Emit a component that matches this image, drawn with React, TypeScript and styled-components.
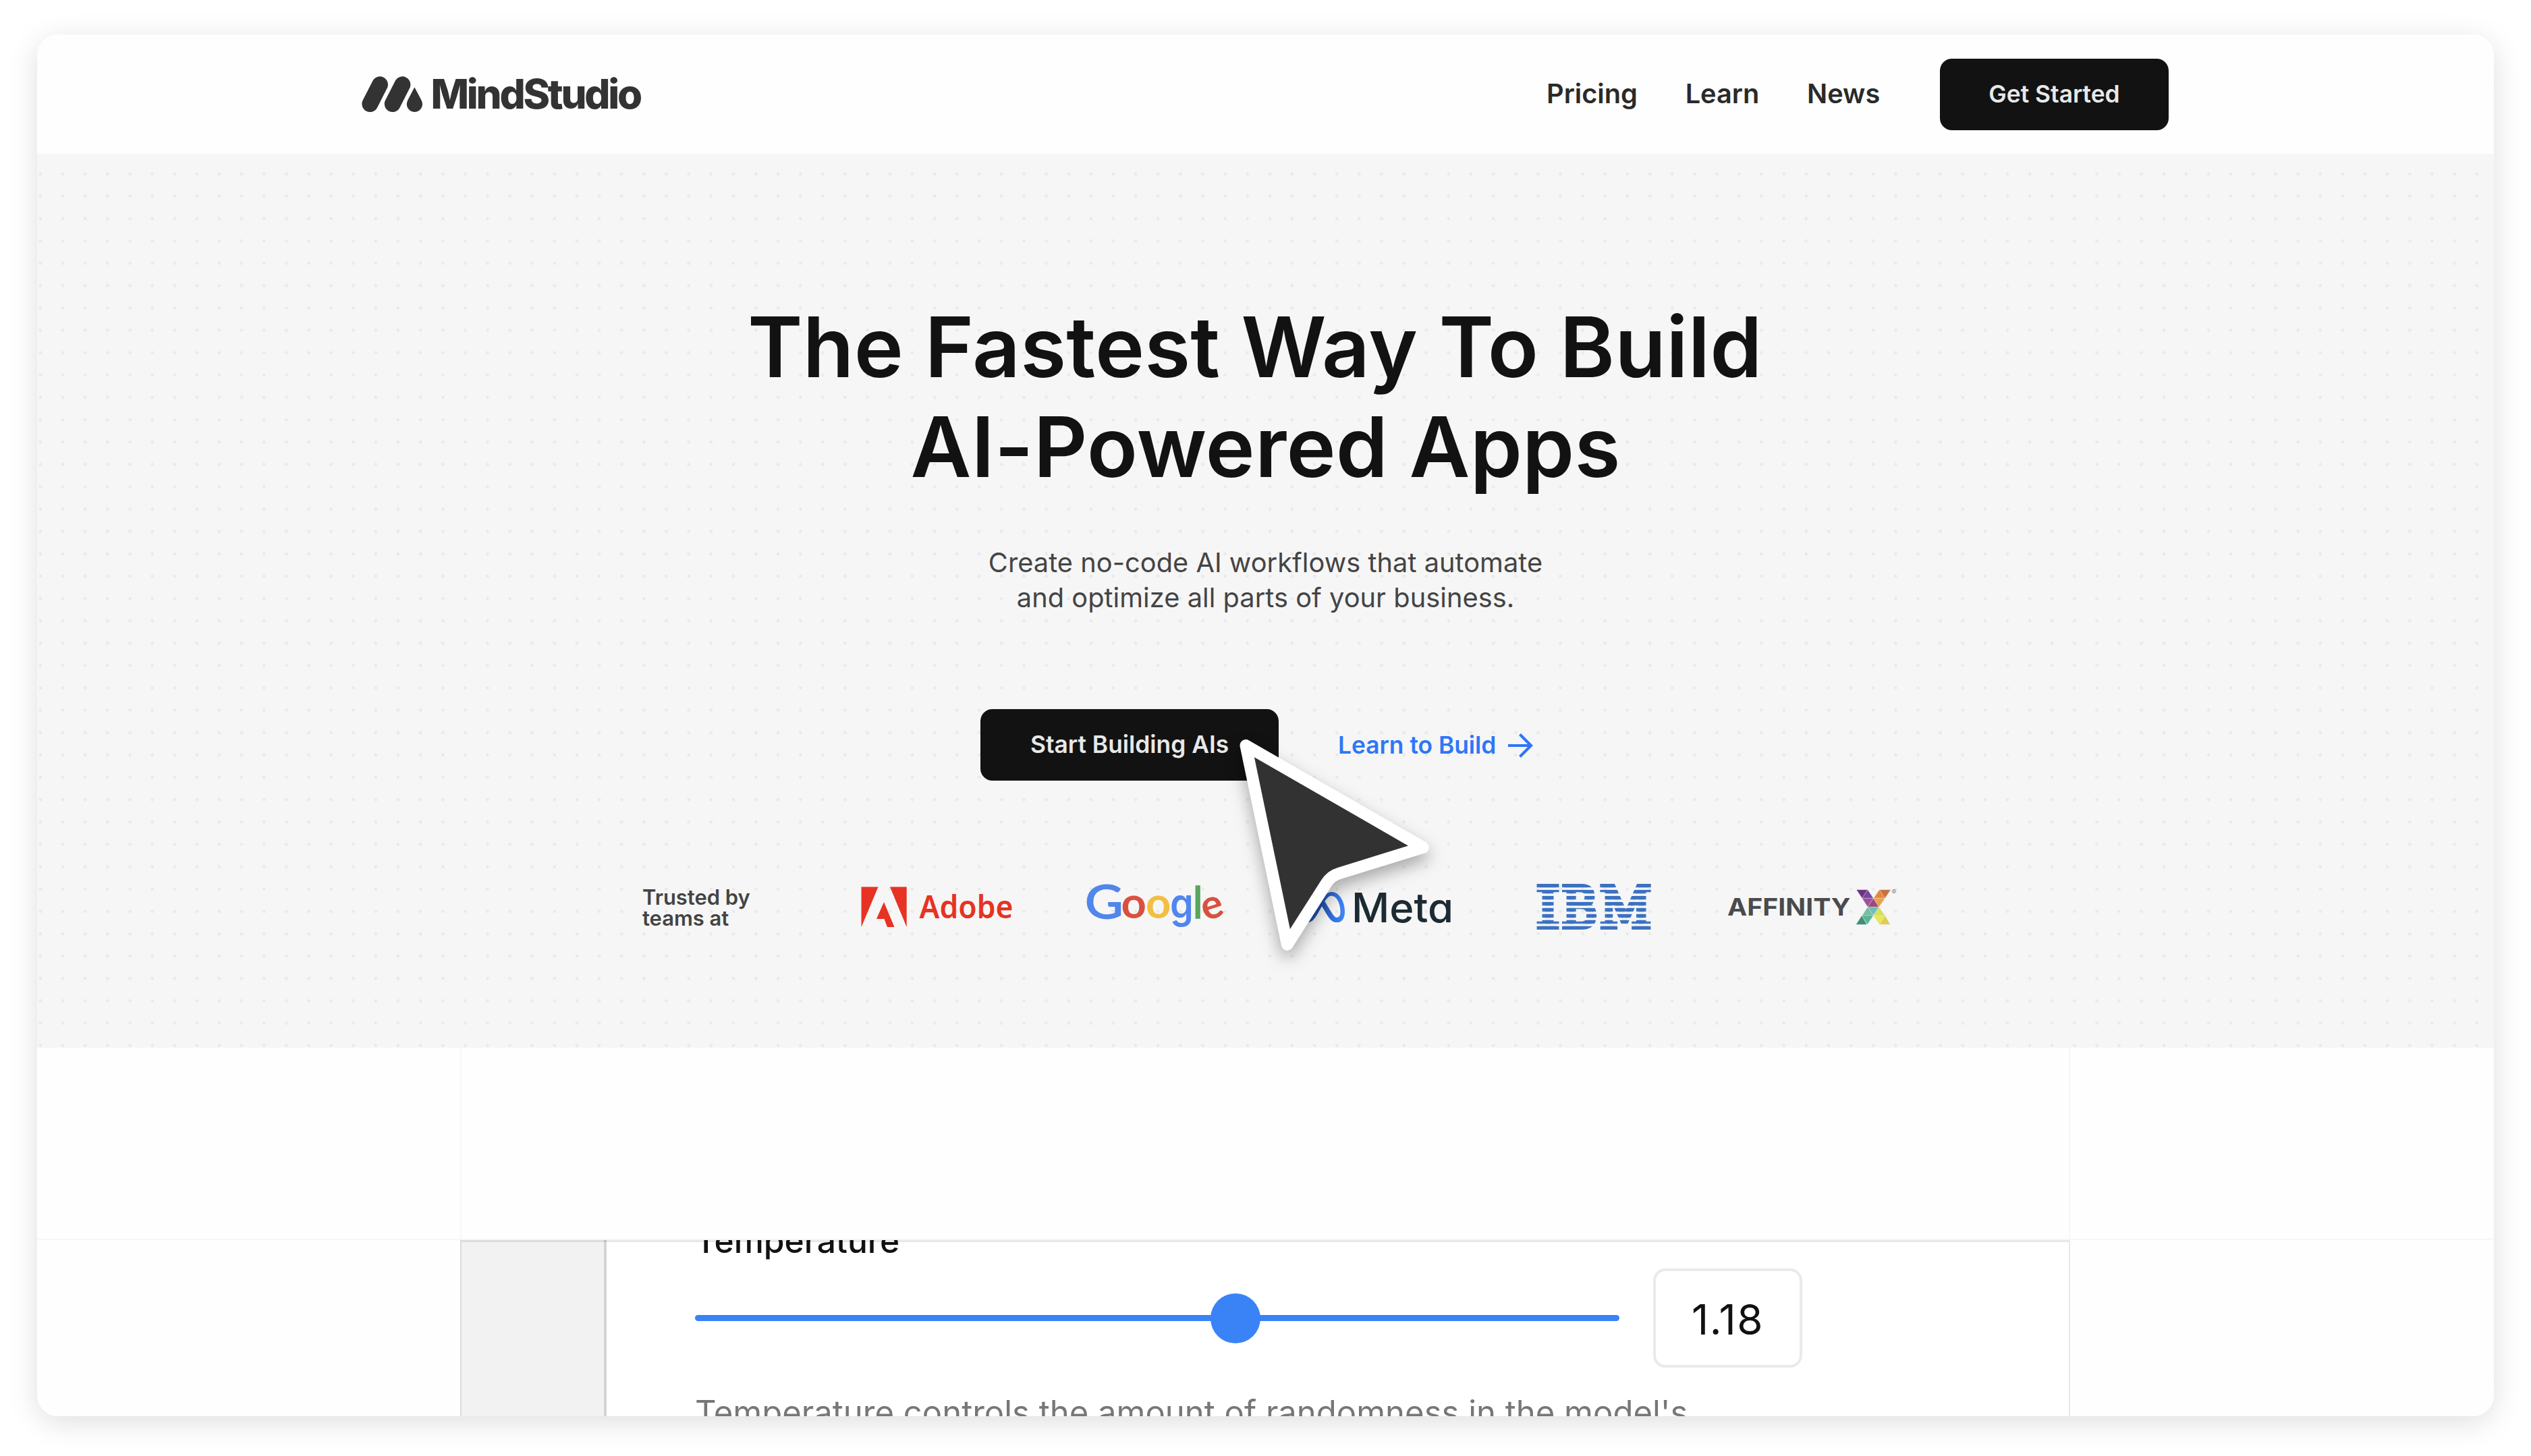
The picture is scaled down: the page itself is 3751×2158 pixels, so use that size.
import React from "react";
import styled, { createGlobalStyle } from "styled-components";
import { SiMeta } from "react-icons/si";

const GlobalStyle = createGlobalStyle`
  html, body { margin: 0; padding: 0; background: #ffffff; }
  body { font-family: Inter, "Liberation Sans", sans-serif; font-optical-sizing: none; }
  *, *::before, *::after { box-sizing: border-box; }
`;

const Page = styled.div`
  width: 3751px;
  height: 2158px;
  padding: 51px 55px 59px;
  overflow: hidden;
`;

const Shadow = styled.div`
  width: 3641px;
  height: 2048px;
  border-radius: 31px;
  box-shadow: 0 9px 44px rgba(0, 0, 0, 0.13);
`;

const Window = styled.div`
  display: flex;
  flex-direction: column;
  width: 3641px;
  height: 2048px;
  border-radius: 31px;
  background: #fefefe;
  overflow: hidden;
`;

const Header = styled.header`
  display: flex;
  align-items: center;
  justify-content: space-between;
  flex: none;
  height: 177px;
  padding: 0 482px 0 481px;
`;

const Brand = styled.a`
  display: flex;
  align-items: center;
  gap: 11.5px;
  color: #333333;
`;

const BrandName = styled.span`
  padding-bottom: 2px;
  font-size: 60px;
  font-weight: 800;
  line-height: 72px;
  letter-spacing: -3.25px;
`;

const Nav = styled.nav`
  display: flex;
  align-items: center;
  gap: 70.7px;
`;

const NavLink = styled.a`
  padding-bottom: 2px;
  color: #2a2a2a;
  font-size: 39.76px;
  font-weight: 600;
  line-height: 48px;
`;

const Button = styled.a<{ $width: number }>`
  display: flex;
  align-items: center;
  justify-content: center;
  width: ${(p) => p.$width}px;
  height: 106px;
  border-radius: 17.7px;
  background: #121212;
  color: #e8e8e8;
  font-size: 35.35px;
  font-weight: 600;
  line-height: 42px;
`;

const NavButton = styled(Button)`
  margin-left: 18px;
`;

const Hero = styled.section`
  position: relative;
  display: flex;
  flex-direction: column;
  align-items: center;
  flex: none;
  height: 1325px;
  padding-top: 212px;
  background-color: #f6f6f6;
  background-image: radial-gradient(circle at 16.57px 16.57px, #e9e9e9 1.9px, rgba(233, 233, 233, 0) 2.7px);
  background-size: 33.136px 33.136px;
  background-position: -11.57px 13.1px;
`;

const Title = styled.h1`
  margin: 0;
  color: #121212;
  font-size: 123.7px;
  font-weight: 600;
  line-height: 148px;
  letter-spacing: 0.18px;
  text-align: center;
  white-space: nowrap;
`;

const Subtitle = styled.p`
  margin: 72px 0 0;
  color: #444444;
  font-size: 39.76px;
  line-height: 51.7px;
  letter-spacing: 0.04px;
  text-align: center;
  white-space: nowrap;
`;

const Actions = styled.div`
  display: flex;
  align-items: center;
  margin-top: 140px;
`;

const LearnLink = styled.a`
  display: flex;
  align-items: center;
  gap: 17px;
  width: 403px;
  padding: 1px 0 0 88px;
  color: #2f76f6;
  font-size: 35.35px;
  font-weight: 600;
  line-height: 42px;
  white-space: nowrap;
`;

const Trusted = styled.div`
  display: grid;
  grid-template-columns: 324px 334px 314px 353px 283px 260px;
  align-self: flex-start;
  align-items: start;
  height: 72px;
  margin: 151.6px 0 0 897px;
`;

const TrustedLabel = styled.span`
  margin-top: 4.6px;
  color: #444444;
  font-size: 30.93px;
  font-weight: 600;
  line-height: 31px;
`;

const Logo = styled.svg`
  display: block;
  overflow: visible;
`;

const Pointer = styled.svg`
  position: absolute;
  left: 1745px;
  top: 822px;
  overflow: visible;
  filter: drop-shadow(0 11px 12px rgba(0, 0, 0, 0.32));
`;

const Showcase = styled.section`
  display: grid;
  grid-template-columns: 627px 2386px 628px;
  grid-template-rows: 285px 261px;
  flex: 1;
`;

const Cell = styled.div<{ $sides?: boolean; $bottom?: boolean }>`
  border: 0 solid #f6f6f6;
  border-left-width: ${(p) => (p.$sides ? "2px" : "0")};
  border-right-width: ${(p) => (p.$sides ? "2px" : "0")};
  border-bottom-width: ${(p) => (p.$bottom ? "2px" : "0")};
`;

const Preview = styled.div`
  position: relative;
  display: flex;
  height: 261px;
  background: #ffffff;
  overflow: hidden;

  &::after {
    content: "";
    position: absolute;
    inset: 0;
    border: solid rgba(0, 0, 0, 0.09);
    border-width: 3px 2px 0 2px;
  }
`;

const Rail = styled.div`
  flex: none;
  width: 217px;
  border-right: 4px solid #d4d4d4;
  background: #f2f2f2;
`;

const Setting = styled.div`
  display: flex;
  flex-direction: column;
  flex: none;
  width: 1900px;
  margin-top: -30px;
  padding-left: 131px;
`;

const SettingTitle = styled.div`
  flex: none;
  height: 62px;
  color: #111111;
  font-size: 49.7px;
  font-weight: 500;
  line-height: 62px;
`;

const SettingRow = styled.div`
  display: flex;
  flex: none;
  align-items: center;
  gap: 50px;
  height: 147px;
  margin-top: 10px;
`;

const Track = styled.div`
  display: flex;
  flex: none;
  align-items: center;
  width: 1370px;
  height: 9px;
  padding-left: 764px;
  border-radius: 5px;
  background: #3a83f6;
`;

const Knob = styled.div`
  flex: none;
  width: 74px;
  height: 74px;
  border-radius: 50%;
  background: #3a83f6;
`;

const ValueBox = styled.div`
  display: flex;
  flex: none;
  align-items: center;
  justify-content: center;
  width: 221px;
  height: 147px;
  padding-top: 3px;
  border: 4px solid #eaeaea;
  border-radius: 18px;
  color: #111111;
  font-size: 62px;
  letter-spacing: 1.4px;
`;

const SettingHint = styled.div`
  flex: none;
  margin-top: 36px;
  color: #777777;
  font-size: 49px;
  line-height: 62px;
  white-space: nowrap;
`;

const BrandMark = () => (
  <Logo width="91" height="54" viewBox="0 0 91 54">
    <g stroke="#333333" strokeWidth="24" strokeLinecap="round">
      <path d="M12.4 41 L27 12.4" />
      <path d="M45.8 41 L60.4 12.4" />
    </g>
    <path
      fill="#333333"
      d="M78.3 16.2 L88 34.5 C90.5 39.5 90.6 43 88.6 46.8 C86.5 50.7 82.9 53 78.5 53 C74 53 70.3 50.7 68.2 46.8 C66.2 43 66.4 39.5 68.8 34.5 Z"
    />
  </Logo>
);

const Arrow = () => (
  <Logo width="38" height="38" viewBox="0 0 38 38" fill="none" stroke="currentColor" strokeWidth="4.2">
    <path d="M1 19 H35 M18.5 2.5 L35 19 L18.5 35.5" />
  </Logo>
);

const AdobeLogo = () => (
  <Logo width="230" height="72" viewBox="1276 1309 230 72" fill="#e63323">
    <path d="M1276.5 1314.5 H1301.5 L1276.5 1374 Z M1319 1314.5 H1343.7 V1374 Z M1310 1337 L1325.5 1374 H1315 L1310.5 1362 H1299 Z" />
    <text x="1362.5" y="1361" fontFamily='"Noto Sans", sans-serif' fontWeight="600" fontSize="46" textLength="139" lengthAdjust="spacingAndGlyphs">
      Adobe
    </text>
  </Logo>
);

const GoogleLogo = () => (
  <Logo width="210" height="72" viewBox="1610 1309 210 72" fontFamily="Lato, sans-serif" fontSize="65" fontWeight="700">
    <text transform="translate(1608 1361) scale(1.14 1)" fill="#5186ec" stroke="#5186ec" strokeWidth="1.8" fontWeight="400" fontSize="68">G</text>
    <text x="1661.5" y="1361" fill="#d85140">o</text>
    <text x="1698" y="1361" fill="#f1bf42">o</text>
    <text transform="translate(1734 1361) scale(0.96 1.06)" fill="#5186ec" fontFamily="Inter, sans-serif" fontWeight="600" fontSize="58">g</text>
    <text x="1767.4" y="1361" fill="#58a55c" stroke="#58a55c" strokeWidth="1.4" fontWeight="400" fontSize="65">l</text>
    <text x="1780.5" y="1361" fill="#d85140" fontSize="60" transform="rotate(-18 1797 1345)">e</text>
  </Logo>
);

const MetaLogo = () => (
  <Logo width="230" height="72" viewBox="1924 1309 230 72">
    <defs>
      <linearGradient id="metaBlue" x1="0" x2="1" y1="0" y2="0">
        <stop offset="0.5" stopColor="#2152b0" />
        <stop offset="0.8" stopColor="#3478ea" />
        <stop offset="1" stopColor="#3f86f8" />
      </linearGradient>
    </defs>
    <SiMeta x="1925" y="1310.5" size={68} fill="url(#metaBlue)" />
    <text x="2003" y="1366.7" fill="#1c2b33" fontWeight="500" fontSize="60.5" textLength="151" lengthAdjust="spacingAndGlyphs" style={{ fontFeatureSettings: '"cv11"' }}>
      Meta
    </text>
  </Logo>
);

const IbmLogo = () => (
  <Logo
    width="171"
    height="72"
    viewBox="0 0 171 72"
    fontFamily='"DejaVu Serif", serif'
    fontWeight="400"
    fontSize="82"
    fill="url(#ibmStripes)"
    stroke="url(#ibmStripes)"
    strokeWidth="8"
    strokeMiterlimit="2"
  >
    <defs>
      <pattern id="ibmStripes" patternUnits="userSpaceOnUse" x="-20" y="1" width="200" height="8.97">
        <rect width="200" height="5.2" fill="#3b71c0" stroke="none" />
      </pattern>
    </defs>
    <text y="65" transform="translate(0 0) scale(1.05 1)">I</text>
    <text y="65" transform="translate(37.6 0) scale(0.87 1)">B</text>
    <text y="65" transform="translate(94.3 0) scale(0.9 1)">M</text>
  </Logo>
);

const FACETS: Array<[string, string]> = [
  ["604,86 654,86 629,124", "#6c3180"],
  ["654,86 679,124 629,124", "#74469d"],
  ["706,86 731,124 680,124", "#e5873f"],
  ["706,86 756,86 731,124", "#c9713f"],
  ["629,124 679,124 654,163", "#9d519b"],
  ["679,124 704,163 654,163", "#9b497e"],
  ["679,124 731,124 704,163", "#eda04d"],
  ["654,163 704,163 679,201", "#6cc0b6"],
  ["654,163 679,201 629,201", "#77bf9f"],
  ["704,163 731,201 679,201", "#d5df62"],
  ["628,201 650,241 602,241", "#418c75"],
  ["628,201 679,201 652,241", "#57b796"],
  ["679,201 731,201 706,241", "#e5e85a"],
  ["731,201 754,241 706,241", "#e1cc52"],
];

const AffinityLogo = () => (
  <Logo width="260" height="72" viewBox="0 57 780 216">
    <text x="0" y="202" fill="#4a4b4d" fontWeight="700" fontSize="106" textLength="547" lengthAdjust="spacingAndGlyphs">
      AFFINITY
    </text>
    <g transform="translate(-30 0)" stroke="#f6f6f6" strokeOpacity="0.35" strokeWidth="2.5" strokeLinejoin="round">
      {FACETS.map(([points, fill]) => (
        <polygon key={points} points={points} fill={fill} />
      ))}
    </g>
    <text x="730" y="107" fill="#8a8a8a" fontSize="32">
      ®
    </text>
  </Logo>
);

const Cursor = () => (
  <Pointer width="360" height="400" viewBox="1800 1050 360 400">
    <path
      d="M1846.3 1104.8 L2109 1256 L1985 1294.3 Q1972.7 1298 1966 1308.5 L1907.7 1400 Z"
      fill="#323232"
      stroke="#ffffff"
      strokeWidth="17.6"
      strokeLinejoin="round"
    />
  </Pointer>
);

export default function App() {
  return (
    <Page>
      <GlobalStyle />
      <Shadow>
        <Window>
          <Header>
            <Brand>
              <BrandMark />
              <BrandName>MindStudio</BrandName>
            </Brand>
            <Nav>
              <NavLink>Pricing</NavLink>
              <NavLink>Learn</NavLink>
              <NavLink>News</NavLink>
              <NavButton $width={339}>Get Started</NavButton>
            </Nav>
          </Header>
          <Hero>
            <Title>
              The Fastest Way To Build&nbsp;
              <br />
              AI-Powered Apps
            </Title>
            <Subtitle>
              Create no-code AI workflows that automate
              <br />
              and optimize all parts of your business.
            </Subtitle>
            <Actions>
              <Button $width={442}>Start Building AIs</Button>
              <LearnLink>
                Learn to Build
                <Arrow />
              </LearnLink>
            </Actions>
            <Trusted>
              <TrustedLabel>
                Trusted by
                <br />
                teams at
              </TrustedLabel>
              <AdobeLogo />
              <GoogleLogo />
              <MetaLogo />
              <IbmLogo />
              <AffinityLogo />
            </Trusted>
            <Cursor />
          </Hero>
          <Showcase>
            <Cell $bottom />
            <Cell $sides $bottom />
            <Cell $bottom />
            <Cell />
            <Preview>
              <Rail />
              <Setting>
                <SettingTitle>Temperature</SettingTitle>
                <SettingRow>
                  <Track>
                    <Knob />
                  </Track>
                  <ValueBox>1.18</ValueBox>
                </SettingRow>
                <SettingHint>Temperature controls the amount of randomness in the model's</SettingHint>
              </Setting>
            </Preview>
            <Cell />
          </Showcase>
        </Window>
      </Shadow>
    </Page>
  );
}
